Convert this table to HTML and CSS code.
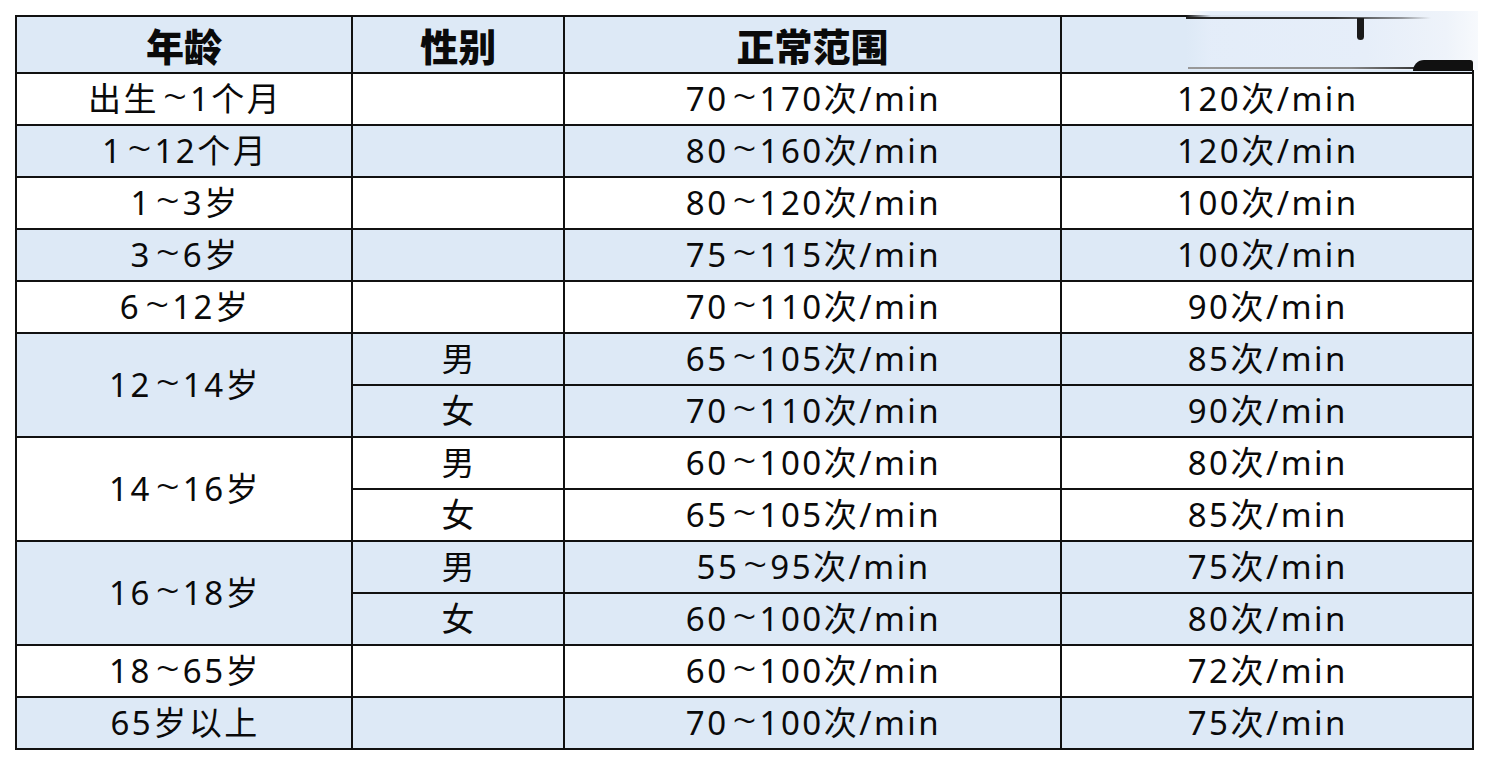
FILE: index.html
```html
<!DOCTYPE html>
<html lang="zh-CN">
<head>
<meta charset="utf-8">
<title>心率正常范围</title>
<link rel="stylesheet" href="styles.css">
</head>
<body>
<table class="hr-table">
  <colgroup>
    <col class="c-age">
    <col class="c-sex">
    <col class="c-range">
    <col class="c-avg">
  </colgroup>
  <thead>
    <tr class="blue head">
      <th>年龄</th>
      <th>性别</th>
      <th>正常范围</th>
      <th class="smudge">
        <span class="sm-fade"></span>
        <span class="sm-top"></span>
        <span class="sm-mark"></span>
        <span class="sm-bottom"></span>
        <span class="sm-blob"></span>
      </th>
    </tr>
  </thead>
  <tbody>
    <tr class="white"><td>出生<span class="tl">~</span>1个月</td><td></td><td>70<span class="tl">~</span>170次/min</td><td>120次/min</td></tr>
    <tr class="blue"><td>1<span class="tl">~</span>12个月</td><td></td><td>80<span class="tl">~</span>160次/min</td><td>120次/min</td></tr>
    <tr class="white"><td>1<span class="tl">~</span>3岁</td><td></td><td>80<span class="tl">~</span>120次/min</td><td>100次/min</td></tr>
    <tr class="blue"><td>3<span class="tl">~</span>6岁</td><td></td><td>75<span class="tl">~</span>115次/min</td><td>100次/min</td></tr>
    <tr class="white"><td>6<span class="tl">~</span>12岁</td><td></td><td>70<span class="tl">~</span>110次/min</td><td>90次/min</td></tr>
    <tr class="blue"><td rowspan="2">12<span class="tl">~</span>14岁</td><td>男</td><td>65<span class="tl">~</span>105次/min</td><td>85次/min</td></tr>
    <tr class="blue"><td>女</td><td>70<span class="tl">~</span>110次/min</td><td>90次/min</td></tr>
    <tr class="white"><td rowspan="2">14<span class="tl">~</span>16岁</td><td>男</td><td>60<span class="tl">~</span>100次/min</td><td>80次/min</td></tr>
    <tr class="white"><td>女</td><td>65<span class="tl">~</span>105次/min</td><td>85次/min</td></tr>
    <tr class="blue"><td rowspan="2">16<span class="tl">~</span>18岁</td><td>男</td><td>55<span class="tl">~</span>95次/min</td><td>75次/min</td></tr>
    <tr class="blue"><td>女</td><td>60<span class="tl">~</span>100次/min</td><td>80次/min</td></tr>
    <tr class="white"><td>18<span class="tl">~</span>65岁</td><td></td><td>60<span class="tl">~</span>100次/min</td><td>72次/min</td></tr>
    <tr class="blue"><td>65岁以上</td><td></td><td>70<span class="tl">~</span>100次/min</td><td>75次/min</td></tr>
  </tbody>
</table>
</body>
</html>
```

FILE: styles.css
```css
html, body {
  margin: 0;
  padding: 0;
  background: #ffffff;
}

body {
  padding: 15px 0 0 15px;
  font-family: "Noto Sans", "Noto Sans CJK SC", sans-serif;
  color: #0a0a0a;
}

.hr-table {
  border-collapse: collapse;
  table-layout: fixed;
  width: 1459px;
}

.c-age { width: 336px; }
.c-sex { width: 212px; }
.c-range { width: 496px; }
.c-avg { width: 412px; }

.hr-table th,
.hr-table td {
  border: 2px solid #111;
  padding: 0;
  text-align: center;
  vertical-align: middle;
  white-space: nowrap;
}

.hr-table td {
  height: 50px;
  font-size: 33px;
  line-height: 40px;
  letter-spacing: 2.5px;
  text-indent: 2px;
}

.hr-table th {
  height: 55px;
  font-family: "Noto Sans CJK SC", sans-serif;
  font-weight: 900;
  font-size: 38px;
  line-height: 44px;
}

.tl {
  display: inline-block;
  margin: 0 3px 0 2px;
  letter-spacing: 0;
  font-size: 42px;
  font-weight: 300;
  line-height: 20px;
  transform: translateY(1px);
}

.blue { background: #dde9f6; }
.white { background: #ffffff; }

/* smudged header cell */
.smudge {
  position: relative;
  overflow: visible;
}

.sm-fade {
  position: absolute;
  left: 124px;
  right: -6px;
  top: -6px;
  bottom: 2px;
  background: linear-gradient(to right,
    rgba(230,238,249,0) 0,
    rgba(228,237,249,0.95) 25px,
    #e6eef9 180px,
    #eef3fa 260px,
    #ffffff 320px,
    #ffffff 100%);
}

.sm-top {
  position: absolute;
  left: 124px;
  top: 0;
  width: 245px;
  height: 2px;
  background: linear-gradient(to right, #222 0, #333 60%, rgba(60,60,60,0.5) 88%, rgba(60,60,60,0) 100%);
}

.sm-mark {
  position: absolute;
  left: 295px;
  top: 1px;
  width: 7px;
  height: 22px;
  border-radius: 0 0 4px 4px;
  background: #1a1a1a;
}

.sm-bottom {
  position: absolute;
  left: 126px;
  right: 52px;
  bottom: 3px;
  height: 2px;
  background: linear-gradient(to right, #999 0, #888 70%, #333 100%);
}

.sm-blob {
  position: absolute;
  right: -1px;
  bottom: 1px;
  width: 60px;
  height: 11px;
  border-radius: 36px 10px 0 0;
  background: #111;
}
```
